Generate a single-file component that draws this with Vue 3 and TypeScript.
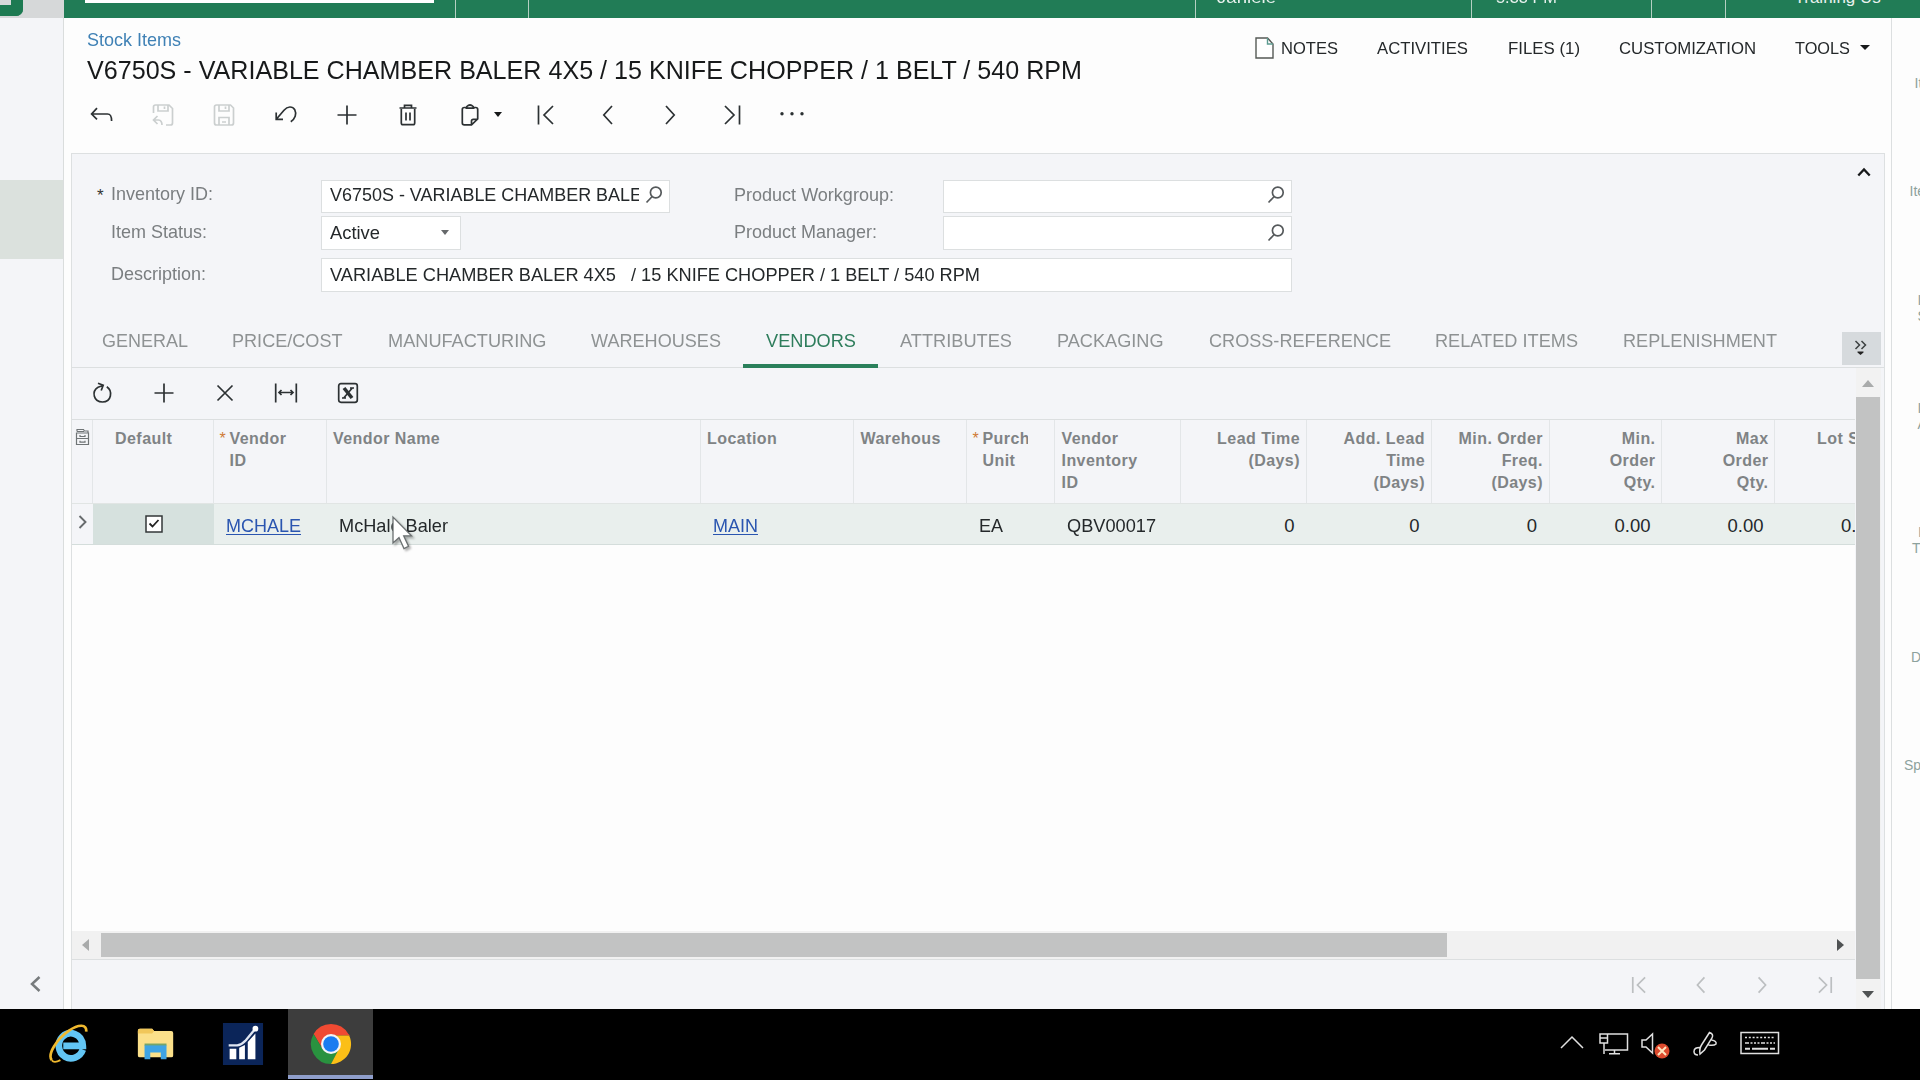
<script setup lang="ts">
interface Tool { name: string; paths: string[]; muted?: boolean; caret?: boolean }
interface Tab { label: string; width: number; active?: boolean }
interface Column {
  width: number
  lines: string[]
  pad: number
  right?: boolean
  required?: boolean
  value?: string
  valuePad: number
  link?: boolean
  valueWidth?: number
}

// Condenses or widens a run of text to a set width without changing its height.
const vFit = {
  mounted(el: HTMLElement, binding: { value?: number }) {
    if (!binding.value) return
    const natural = el.getBoundingClientRect().width
    el.style.transform = `scaleX(${binding.value / natural})`
    el.style.marginRight = `${binding.value - natural}px`
  },
}

const first = 'M5.5 4.5V23.5M20 5L11 14L20 23'
const prev = 'M18 5L9.8 14L18 23'
const next = 'M10 5L18.2 14L10 23'
const last = 'M8 5L17 14L8 23M22.5 4.5V23.5'
const plus = 'M14 4.5V23.5M4.5 14H23.5'

const tools: Tool[] = [
  { name: 'back', paths: ['M9 7.2L3.6 13L9 18.4M3.8 13H19.5C22.5 13 23.6 14.5 23.6 20'] },
  { name: 'save and close', muted: true, paths: ['M4.5 12V6Q4.5 4 6.5 4H20L23.5 7.5V22Q23.5 24 21.5 24H17M9 4V10H19V4M15.5 5.5V8M8.5 15L4.5 19L8.5 23M4.8 19H9.5Q13 19.3 13 24'] },
  { name: 'save', muted: true, paths: ['M6.5 4H20.5L23.5 7V22Q23.5 24 21.5 24H6.5Q4.5 24 4.5 22V6Q4.5 4 6.5 4ZM9 4V10H19V4M15.5 5.5V8M9 24V16.5H19V24M12 21H16'] },
  { name: 'undo', paths: ['M4.5 18L12 9.2C15.5 5 20.5 5 22.8 8.8C25 13 23 18 18.8 20.8M4.2 11.5V18.4H11'] },
  { name: 'add', paths: [plus] },
  { name: 'delete', paths: ['M5.5 7H22.5M7.3 8V22Q7.3 23.7 9 23.7H19Q20.7 23.7 20.7 22V8M10.5 6.5V4.3H17.5V6.5M12 11.5V19.5M16 11.5V19.5'] },
  { name: 'clipboard', caret: true, paths: ['M10.5 6.5H8.3Q6.3 6.5 6.3 8.5V22Q6.3 23.9 8.3 23.9H15.5L21.7 18V8.5Q21.7 6.5 19.7 6.5H17.5M9.5 7.2H18.5M10.8 7V5.5Q14 2.5 17.2 5.5V7M15.5 23.5V20Q15.5 18.3 17.3 18.3H21.3'] },
  { name: 'first', paths: [first] },
  { name: 'previous', paths: [prev] },
  { name: 'next', paths: [next] },
  { name: 'last', paths: [last] },
  { name: 'more', paths: [] },
]

const gridTools: Tool[] = [
  { name: 'refresh', paths: ['M18.8 7.8C25 12 23.5 23 14.5 23C5.5 23 3.3 12.5 10 8.3M10 4.2L15.2 6.3L13.2 11.5M15 6.5L10 8.3'] },
  { name: 'add', paths: [plus] },
  { name: 'remove', paths: ['M6.5 6.5L21.5 21.5M21.5 6.5L6.5 21.5'] },
  { name: 'fit columns', paths: ['M3.7 4.5V23.5M24.3 4.5V23.5M7 13.5H21M9.5 11L7 13.5L9.5 16M18.5 11L21 13.5L18.5 16'] },
  { name: 'export', paths: ['M7 4.7H21Q23.3 4.7 23.3 7V21Q23.3 23.3 21 23.3H7Q4.7 23.3 4.7 21V7Q4.7 4.7 7 4.7Z'] },
]

const menu = [
  { label: 'NOTES', width: 57, gap: 39 },
  { label: 'ACTIVITIES', width: 91, gap: 39.5 },
  { label: 'FILES (1)', width: 72, gap: 39 },
  { label: 'CUSTOMIZATION', width: 137, gap: 39.5 },
  { label: 'TOOLS', width: 55, gap: 0 },
]

const tabs: Tab[] = [
  { label: 'GENERAL', width: 86 },
  { label: 'PRICE/COST', width: 110.5 },
  { label: 'MANUFACTURING', width: 158.5 },
  { label: 'WAREHOUSES', width: 130 },
  { label: 'VENDORS', width: 90, active: true },
  { label: 'ATTRIBUTES', width: 112 },
  { label: 'PACKAGING', width: 106.5 },
  { label: 'CROSS-REFERENCE', width: 182 },
  { label: 'RELATED ITEMS', width: 143 },
  { label: 'REPLENISHMENT', width: 154 },
]

const columns: Column[] = [
  { width: 113, lines: ['Vendor', 'ID'], pad: 16, required: true, value: 'MCHALE', valuePad: 12, link: true, valueWidth: 75 },
  { width: 374, lines: ['Vendor Name'], pad: 6.5, value: 'McHale Baler', valuePad: 12, valueWidth: 109 },
  { width: 153, lines: ['Location'], pad: 6.5, value: 'MAIN', valuePad: 12, link: true, valueWidth: 45 },
  { width: 113, lines: ['Warehous'], pad: 7, valuePad: 12 },
  { width: 88, lines: ['Purch', 'Unit'], pad: 16, required: true, value: 'EA', valuePad: 12, valueWidth: 24 },
  { width: 126, lines: ['Vendor', 'Inventory', 'ID'], pad: 7, value: 'QBV00017', valuePad: 12, valueWidth: 89 },
  { width: 126, lines: ['Lead Time', '(Days)'], pad: 5.5, right: true, value: '0', valuePad: 12 },
  { width: 125, lines: ['Add. Lead', 'Time', '(Days)'], pad: 5.5, right: true, value: '0', valuePad: 12 },
  { width: 118, lines: ['Min. Order', 'Freq.', '(Days)'], pad: 5.5, right: true, value: '0', valuePad: 12.5 },
  { width: 112.5, lines: ['Min.', 'Order', 'Qty.'], pad: 5.5, right: true, value: '0.00', valuePad: 11.5 },
  { width: 113, lines: ['Max', 'Order', 'Qty.'], pad: 5.5, right: true, value: '0.00', valuePad: 11.5 },
  { width: 113, lines: ['Lot Size'], pad: 5, right: true, value: '0.00', valuePad: 11 },
]

const sideLinks = [
  { lines: ['Item'], top: 75, left: 1914.5 },
  { lines: ['Items'], top: 183, left: 1909.5 },
  { lines: ['Item', 'Stats'], top: 292, left: 1917.5 },
  { lines: ['Item', 'Alloc'], top: 400, left: 1917.5 },
  { lines: ['Item'], top: 524, left: 1918 },
  { lines: ['Trans'], top: 540, left: 1912 },
  { lines: ['Docs'], top: 649, left: 1911 },
  { lines: ['Specs'], top: 757, left: 1904 },
]
const pagers = [first, prev, next, last]
</script>

<template>
  <div class="screen">
    <div class="app">
      <aside class="left">
        <div class="logo"><i></i></div>
        <div class="selected"></div>
        <svg class="collapse" width="14" height="20" viewBox="0 0 14 20"><path d="M11.5 3L4 10L11.5 17" /></svg>
      </aside>

      <div class="work">
        <div class="topbar">
          <div class="tb search"><i></i></div>
          <div class="tb help"></div>
          <div class="tb blank"></div>
          <div class="tb branch"><span v-fit="59">Janiele</span></div>
          <div class="tb date"><span v-fit="61">5:33 PM</span></div>
          <div class="tb info"></div>
          <div class="tb user"><span>Training Us</span></div>
        </div>

        <div class="columns">
          <main>
            <header>
              <div class="heading">
                <div>
                  <div class="crumb"><span v-fit="94">Stock Items</span></div>
                  <h1><span v-fit="995">V6750S - VARIABLE CHAMBER BALER 4X5 / 15 KNIFE CHOPPER / 1 BELT / 540 RPM</span></h1>
                </div>
                <nav class="menu">
                  <svg width="19" height="22" viewBox="0 0 19 22"><path d="M1 1H12.5L18 7V21H1Z" fill="#fff" stroke="#555a55" stroke-width="1.4" /><path d="M12.5 1V7H18" fill="none" stroke="#5d9c91" stroke-width="1.4" /></svg>
                  <span v-for="m in menu" :key="m.label" class="item" :style="{ paddingRight: m.gap + 'px' }"><span v-fit="m.width">{{ m.label }}</span></span>
                  <i class="caret"></i>
                </nav>
              </div>
              <div class="toolbar main">
                <button v-for="t in tools" :key="t.name" :class="{ muted: t.muted, drop: t.caret }" :aria-label="t.name">
                  <svg width="28" height="28" viewBox="0 0 28 28">
                    <path v-for="p in t.paths" :key="p" :d="p" />
                    <g v-if="t.name === 'more'" class="solid"><circle cx="4" cy="12.8" r="1.7" /><circle cx="14" cy="12.8" r="1.7" /><circle cx="24" cy="12.8" r="1.7" /></g>
                  </svg>
                  <i v-if="t.caret" class="caret"></i>
                </button>
              </div>
            </header>

            <section class="panel">
              <div class="form">
                <div class="frow r1">
                  <label><b>*</b><span v-fit="102">Inventory ID:</span></label>
                  <div class="field w349"><div class="clip"><span v-fit="325">V6750S - VARIABLE CHAMBER BALER</span></div>
                    <svg class="lens" width="20" height="20" viewBox="0 0 20 20"><circle cx="11.8" cy="7.5" r="5.4" /><path d="M8.2 11.5L2.5 17.5" /></svg></div>
                  <label class="second"><span v-fit="160">Product Workgroup:</span></label>
                  <div class="field w349"><svg class="lens" width="20" height="20" viewBox="0 0 20 20"><circle cx="11.8" cy="7.5" r="5.4" /><path d="M8.2 11.5L2.5 17.5" /></svg></div>
                </div>
                <div class="frow r2">
                  <label><b></b><span v-fit="96">Item Status:</span></label>
                  <div class="field w140"><span v-fit="50">Active</span><i class="caret grey"></i></div>
                  <label class="second after"><span v-fit="143">Product Manager:</span></label>
                  <div class="field w349"><svg class="lens" width="20" height="20" viewBox="0 0 20 20"><circle cx="11.8" cy="7.5" r="5.4" /><path d="M8.2 11.5L2.5 17.5" /></svg></div>
                </div>
                <div class="frow r3">
                  <label><b></b><span v-fit="95">Description:</span></label>
                  <div class="field wide"><span v-fit="286">VARIABLE CHAMBER BALER 4X5</span><span class="rest" v-fit="349">/ 15 KNIFE CHOPPER / 1 BELT / 540 RPM</span></div>
                </div>
                <svg class="fold" width="16" height="12" viewBox="0 0 16 12"><path d="M2.3 9.5L8 3.5L13.7 9.5" /></svg>
              </div>

              <div class="tabs">
                <div v-for="t in tabs" :key="t.label" class="tab" :class="{ active: t.active }"><span v-fit="t.width">{{ t.label }}</span></div>
                <div class="overflow">
                  <svg width="16" height="18" viewBox="0 0 16 18"><path d="M2.5 2L6.5 6L2.5 10M8.5 2L12.5 6L8.5 10" fill="none" stroke="#3c4041" stroke-width="1.5" /><path d="M4.5 12.5H10.5V13.5L7.5 16L4.5 13.5Z" fill="#222" /></svg>
                </div>
              </div>

              <div class="gridarea">
                <div class="grid">
                  <div class="toolbar small">
                    <button v-for="t in gridTools" :key="t.name" :aria-label="t.name">
                      <svg width="28" height="28" viewBox="0 0 28 28">
                        <path v-for="p in t.paths" :key="p" :d="p" />
                        <path v-if="t.name === 'export'" d="M10 9L18 19" class="thick" />
                        <path v-if="t.name === 'export'" d="M18.3 9L9.7 19M16 9H20M8 19H12" />
                      </svg>
                    </button>
                  </div>
                  <div class="thead">
                    <div class="th files">
                      <svg width="15" height="18" viewBox="0 0 15 18"><path d="M2 3.5V1.5H8.5L9.5 3H13V5M1.5 5H13.5V16.5H1.5ZM1.5 10.5H13.5M5 7V8.5H10V7M5 12.7V14.2H10V12.7M2 3.5H9" fill="none" stroke="#6f7476" stroke-width="1.2" /></svg>
                    </div>
                    <div class="th def">Default</div>
                    <div v-for="c in columns" :key="c.lines.join()" class="th" :class="{ right: c.right }" :style="{ width: c.width + 'px', paddingLeft: (c.right ? 0 : c.pad) + 'px', paddingRight: (c.right ? c.pad : 0) + 'px' }">
                      <i v-if="c.required" class="req">*</i>
                      <div v-for="l in c.lines" :key="l" class="line" :class="{ cut: l === 'Purch' }">{{ l }}</div>
                    </div>
                  </div>
                  <div class="trow">
                    <div class="td arrow"><svg width="12" height="18" viewBox="0 0 12 18"><path d="M2.5 3L8.5 9L2.5 15" /></svg></div>
                    <div class="td check">
                      <svg width="18" height="18" viewBox="0 0 18 18"><rect x="1" y="1" width="16" height="16" fill="#fff" stroke="#333738" stroke-width="1.5" /><path d="M4.5 8.5L7.5 11.5L13.5 5" fill="none" stroke="#222" stroke-width="1.8" /></svg>
                    </div>
                    <div v-for="c in columns" :key="c.lines.join()" class="td" :class="{ right: c.right }" :style="{ width: c.width + 'px', paddingLeft: (c.right ? 0 : c.valuePad) + 'px', paddingRight: (c.right ? c.valuePad : 0) + 'px' }">
                      <span v-fit="c.valueWidth" :class="{ link: c.link }">{{ c.value }}</span>
                    </div>
                  </div>
                  <div class="empty"></div>
                  <div class="hscroll"><i class="tri l"></i><div class="thumb"></div><i class="tri r"></i></div>
                  <div class="pager">
                    <svg v-for="p in pagers" :key="p" width="28" height="28" viewBox="0 0 28 28"><path :d="p" /></svg>
                  </div>
                </div>
                <div class="vscroll"><i class="tri u"></i><div class="thumb"></div><i class="tri d"></i></div>
              </div>
            </section>
          </main>
          <aside class="right"></aside>
        </div>
      </div>
      <div v-for="s in sideLinks" :key="s.top" class="sidelink" :style="{ top: s.top + 'px', left: s.left + 'px' }">
        <div v-for="l in s.lines" :key="l">{{ l }}</div>
      </div>
      <svg class="pointer" width="28" height="38" viewBox="0 0 28 38"><path d="M3 2V28L9 22.5L14 33.5L18.5 31.3L13.7 20.8H21.5Z" fill="#fff" stroke="#6b7071" stroke-width="1.3" /></svg>
    </div>

    <footer class="taskbar">
      <div class="launch">
        <svg width="44" height="44" viewBox="0 0 44 44">
          <path d="M36.5 28C33.5 36.5 24 39 18 35.5C10 31 9.5 20 15 14.5C22 7.5 36 10.5 36.5 24H16" fill="none" stroke="#62c5f4" stroke-width="7" />
          <path d="M4 39C-1 33 9 17 22 8C32 1 41 1 40 9" fill="none" stroke="#f0b92e" stroke-width="2.8" />
          <path d="M4 39C6 42 10 40.5 13 39" fill="none" stroke="#f0b92e" stroke-width="2" />
        </svg>
      </div>
      <div class="launch">
        <svg width="44" height="44" viewBox="0 0 44 44">
          <path d="M3 8Q3 6 5 6H18L20 8.5H38Q40 8.5 40 10.5V34Q40 36 38 36H5Q3 36 3 34Z" fill="#fbe08a" /><path d="M3 8Q3 6 5 6H18L20 8.5L18 11H3Z" fill="#f1c75a" />
          <path d="M10 38V23H33V38H27V31H16V38Z" fill="#3fa4e4" /><path d="M10 21.5H33V23.5H10Z" fill="#74a56b" />
        </svg>
      </div>
      <div class="launch">
        <svg width="44" height="44" viewBox="0 0 44 44">
          <rect x="1" y="0" width="42" height="44" fill="#0b2559" />
          <path d="M8 27H15V38H8ZM18 26L24 23V38H18ZM27 20L35 11V38H27Z" fill="#fff" />
          <path d="M7 23.5H16Q21 22.5 25 18L34 7" fill="none" stroke="#dfe6f2" stroke-width="2.4" /><circle cx="35" cy="6" r="3" fill="#fff" />
        </svg>
      </div>
      <div class="launch current">
        <svg width="44" height="44" viewBox="0 0 44 44">
          <path d="M3.8 11.5A21 21 0 0 1 40.2 11.5L42 13H22L13 27Z" fill="#f04a32" />
          <path d="M3.8 11.5L13 27L22 32L22 43A21 21 0 0 1 3.8 11.5Z" fill="#29923f" />
          <path d="M12 26L22 43L31 27Z" fill="#29923f" />
          <path d="M31 26L22 43A21 21 0 0 0 41 13H25Z" fill="#fbbf17" />
          <circle cx="22" cy="22" r="10.5" fill="#f4f4f4" /><circle cx="22" cy="22" r="8.2" fill="#1a7cf0" />
        </svg>
      </div>
      <svg class="tray" width="230" height="40" viewBox="1555 1023 230 40">
        <g fill="none" stroke="#e0e0e0" stroke-width="1.5">
          <path d="M1561 1048L1572 1037L1583 1048" />
          <path d="M1608 1034H1627.5V1050H1605M1614.5 1050V1053.5M1609 1053.7H1620" />
          <path d="M1600 1034H1607.5V1043H1600ZM1600 1038H1607.5M1604 1043V1054" />
          <path d="M1642 1040H1646L1652.5 1034V1053L1646 1047H1642Z" />
          <path d="M1709.5 1032.5Q1714 1034 1712 1038L1704.5 1050L1700 1054Q1699 1049 1701.5 1045ZM1701 1047.5Q1694 1047 1694 1051.5Q1694 1055 1698 1055M1711.5 1040Q1717 1041 1716 1044Q1714 1046 1708.5 1045" />
          <rect x="1741" y="1032.5" width="37.5" height="21" />
          <path d="M1745 1037.5H1775" stroke-dasharray="2 1.8" /><path d="M1745 1043H1775" stroke-dasharray="4 1.5 2 1.5 2 1.5 2 1.5" /><path d="M1745 1048.7H1750M1752 1048.7H1768M1770 1048.7H1775" stroke-width="2" />
        </g>
        <circle cx="1662" cy="1051" r="7.5" fill="#dd4a2d" /><path d="M1658 1047L1666 1055M1666 1047L1658 1055" stroke="#ffe6c0" stroke-width="2" />
      </svg>
    </footer>
  </div>
</template>

<style>
body { margin: 0; overflow: hidden; }
</style>

<style scoped>
* { box-sizing: border-box; }
.screen { width: 1920px; height: 1080px; overflow: hidden; display: flex; flex-direction: column; font-family: "Liberation Sans", Arial, sans-serif; font-size: 18.5px; color: #24282a; background: #000; }
span { display: inline-block; white-space: pre; transform-origin: left center; }
i { font-style: normal; }
.app { position: relative; height: 1008.5px; display: flex; overflow: hidden; background: #fdfdfd; }
.left { width: 64px; flex: none; background: #f4f5f8; border-right: 1.5px solid #dadddd; display: flex; flex-direction: column; }
.logo { height: 18px; background: #d6d8d9; margin-right: -1px; }
.logo i { display: block; width: 23px; height: 16px; background: #d6d8d9; border: solid #1d7a52; border-width: 0 12px 11px 0; border-bottom-right-radius: 7px; }
.selected { height: 79px; margin-top: 162px; background: #dbe1dd; }
.collapse { margin: 715px 0 0 28px; }
.collapse path { fill: none; stroke: #777b7d; stroke-width: 2.5; }
.work { flex: 1; min-width: 0; display: flex; flex-direction: column; }
.topbar { height: 18px; flex: none; background: #217c56; display: flex; color: #e9f2ee; overflow: hidden; }
.tb { border-right: 1.5px solid #b5cfc2; height: 18px; flex: none; }
.tb span { position: relative; top: -14.5px; line-height: 20px; font-size: 17px; }
.search { width: 391.5px; padding-left: 21px; }
.search i { display: block; width: 349px; height: 2.5px; background: #fff; }
.help { width: 73.5px; }
.blank { width: 666.5px; }
.branch { width: 276px; padding-left: 21px; }
.date { width: 180.5px; padding-left: 24px; }
.info { width: 73.5px; }
.user { border: 0; padding-left: 69px; }
.columns { flex: 1; display: flex; min-height: 0; }
main { width: 1821px; flex: none; display: flex; flex-direction: column; }
header { height: 134.5px; flex: none; padding-left: 23px; }
.heading { display: flex; justify-content: space-between; }
.crumb { padding-top: 11px; height: 33px; line-height: 22px; color: #3f81b5; }
h1 { margin: 4px 0 0; font-weight: 400; font-size: 25px; line-height: 30px; height: 34px; color: #17191a; }
.menu { display: flex; align-items: center; height: 24px; margin-top: 17.5px; padding-right: 14.7px; font-size: 16.5px; line-height: 24px; }
.menu > svg { margin-right: 7px; }
.menu .item { white-space: nowrap; }
.caret { display: inline-block; width: 0; height: 0; border: solid transparent; border-width: 5.5px 5px 0; border-top-color: #17191a; }
.menu .caret { margin-left: 10px; }
.toolbar { display: flex; height: 50px; align-items: center; margin-left: -16px; }
.toolbar.main { height: 52px; }
button { width: 61.35px; height: 32px; border: 0; background: none; padding: 0; display: flex; align-items: center; justify-content: center; position: relative; }
button svg { flex: none; }
button path { fill: none; stroke: #2c3133; stroke-width: 1.7; }
button .solid { fill: #2c3133; }
button .thick { stroke-width: 3.6; }
button.muted path { stroke: #cbcfcf; }
.drop { margin-right: 16px; }
.drop .caret { position: absolute; left: 54.5px; top: 13px; border-width: 5px 4.5px 0; }
.panel { flex: 1; margin-left: 6.5px; border: solid #dde0e1; border-width: 1.5px 1.5px 0; background: #f4f5f8; display: flex; flex-direction: column; min-height: 0; }
.form { position: relative; height: 160px; flex: none; padding: 26px 0 0 25.5px; }
.fold { position: absolute; right: 12px; top: 12px; }
.fold path { fill: none; stroke: #17191a; stroke-width: 2.3; }
.frow { display: flex; align-items: center; height: 33.5px; }
.r2 { margin-top: 3px; }
.r3 { margin-top: 8.5px; }
label { width: 223.5px; color: #7a7e80; flex: none; display: flex; padding-bottom: 3px; }
.r2 label, .r3 label { padding-bottom: 1.5px; }
label b { width: 13.5px; color: #333; font-weight: 400; font-size: 17px; padding-top: 3px; }
label.second { width: 273.5px; padding-left: 64px; }
label.after { margin-left: 209px; }
.field { height: 33.5px; flex: none; border: 1.5px solid #dcdfe0; background: #fff; display: flex; align-items: center; padding: 0 4px 2px 8px; line-height: 24px; }
.r2 .field { padding-bottom: 0; }
.r3 .field { padding-bottom: 0; }
.w349 { width: 349px; justify-content: flex-end; }
.w140 { width: 140px; justify-content: space-between; padding-right: 11px; }
.wide { width: 971.5px; }
.rest { margin-left: 15px; }
.clip { width: 309px; overflow: hidden; margin-right: auto; white-space: nowrap; height: 24px; }
.lens { flex: none; margin-right: 1px; }
.lens path, .lens circle { fill: none; stroke: #55595b; stroke-width: 1.7; }
.caret.grey { border-width: 5px 4.5px 0; border-top-color: #66696b; }
.tabs { display: flex; height: 54px; flex: none; border-bottom: 1.5px solid #dcdfe0; padding-left: 7.7px; position: relative; color: #8e9293; }
.tab { padding: 16px 22.4px 0; height: 54px; line-height: 22px; white-space: nowrap; border-bottom: 4px solid transparent; }
.tab.active { color: #2e7d5c; border-color: #2a805b; }
.overflow { margin-left: auto; margin-right: 3.5px; width: 38.5px; height: 33.5px; margin-top: 18px; background: #d6dadd; display: flex; align-items: center; justify-content: center; }
.gridarea { flex: 1; display: flex; min-height: 0; }
.grid { width: 1783px; flex: none; overflow: hidden; display: flex; flex-direction: column; }
.toolbar.small { height: 52px; flex: none; margin: 0; border-bottom: 1.5px solid #dcdfe0; }
.thead { display: flex; height: 84px; flex: none; border-bottom: 1px solid #e1e5e4; }
.th { flex: none; position: relative; padding-top: 8.5px; line-height: 22.2px; font-size: 16px; font-weight: 700; letter-spacing: .45px; color: #7f8385; border-right: 1.5px solid #e3e6e8; overflow: hidden; }
.right { text-align: right; }
.files { width: 21.5px; padding: 8.5px 0 0 3px; }
.def { width: 120.5px; padding-left: 22px; }
.line { white-space: nowrap; }
.line.cut { width: 45px; overflow: hidden; }
.req { position: absolute; left: 6px; top: 8px; color: #cf7a35; font-weight: 400; }
.trow { display: flex; height: 41.5px; flex: none; background: #e9efed; border-bottom: 1.5px solid #d4dddb; line-height: 22px; }
.td { flex: none; padding-top: 11px; white-space: nowrap; }
.td.arrow { width: 21.5px; padding: 9.5px 0 0 5px; background: #f4f5f8; }
.arrow path { fill: none; stroke: #676b6d; stroke-width: 1.9; }
.td.check { width: 120.5px; background: #d6e1de; padding: 11px 0 0 51.5px; }
.link { color: #2a55b0; text-decoration: underline; text-underline-offset: 2px; }
.empty { flex: 1; background: #fdfdfd; }
.hscroll { height: 29px; flex: none; background: #f1f1f1; border-bottom: 1.5px solid #dcdfe0; display: flex; align-items: center; }
.tri { width: 0; height: 0; flex: none; border: 6.5px solid transparent; }
.tri.l { border-width: 6.5px 7px 6.5px 0; border-right-color: #a9abab; margin: 0 12px 0 10px; }
.hscroll .thumb { width: 1346.5px; height: 24px; background: #c2c3c3; }
.tri.r { border-width: 6.5px 0 6.5px 7px; border-left-color: #4f5253; margin: 0 11px 0 auto; }
.pager { height: 49px; flex: none; display: flex; justify-content: flex-end; align-items: center; gap: 33.2px; padding: 1px 17px 0 0; }
.pager path { fill: none; stroke: #bcbfc1; stroke-width: 2; }
.pager svg { transform: scale(.85); }
.vscroll { width: 25px; margin-left: 1px; background: #f2f2f2; display: flex; flex-direction: column; align-items: center; }
.tri.u { border-width: 0 6.5px 7px; border-bottom-color: #a9abab; margin: 12.5px 0 10px; }
.vscroll .thumb { width: 24px; height: 582px; background: #c2c3c3; }
.tri.d { border-width: 7px 6.5px 0; border-top-color: #4f5253; margin-top: 12px; }
aside.right { flex: 1; margin-left: 5.5px; border-left: 1.5px solid #dcdfe0; background: #fdfdfd; }
.sidelink { position: absolute; font-size: 14px; line-height: 16px; color: #8da29d; white-space: nowrap; }
.pointer { position: absolute; left: 389.5px; top: 515px; filter: drop-shadow(2px 2px 1px rgba(0, 0, 0, .3)); }
.taskbar { position: relative; flex: 1; background: #000; display: flex; padding-left: 26.5px; }
.launch { width: 85px; height: 70px; margin-right: 2.2px; display: flex; align-items: center; justify-content: center; }
.launch.current { background: #3d3d3d; border-bottom: 4px solid #8f9ecb; }
.launch svg { width: 42px; height: 42px; }
.launch.current svg { margin-top: 4px; }
.tray { margin-left: auto; margin-right: 135px; margin-top: 14.5px; }
</style>
